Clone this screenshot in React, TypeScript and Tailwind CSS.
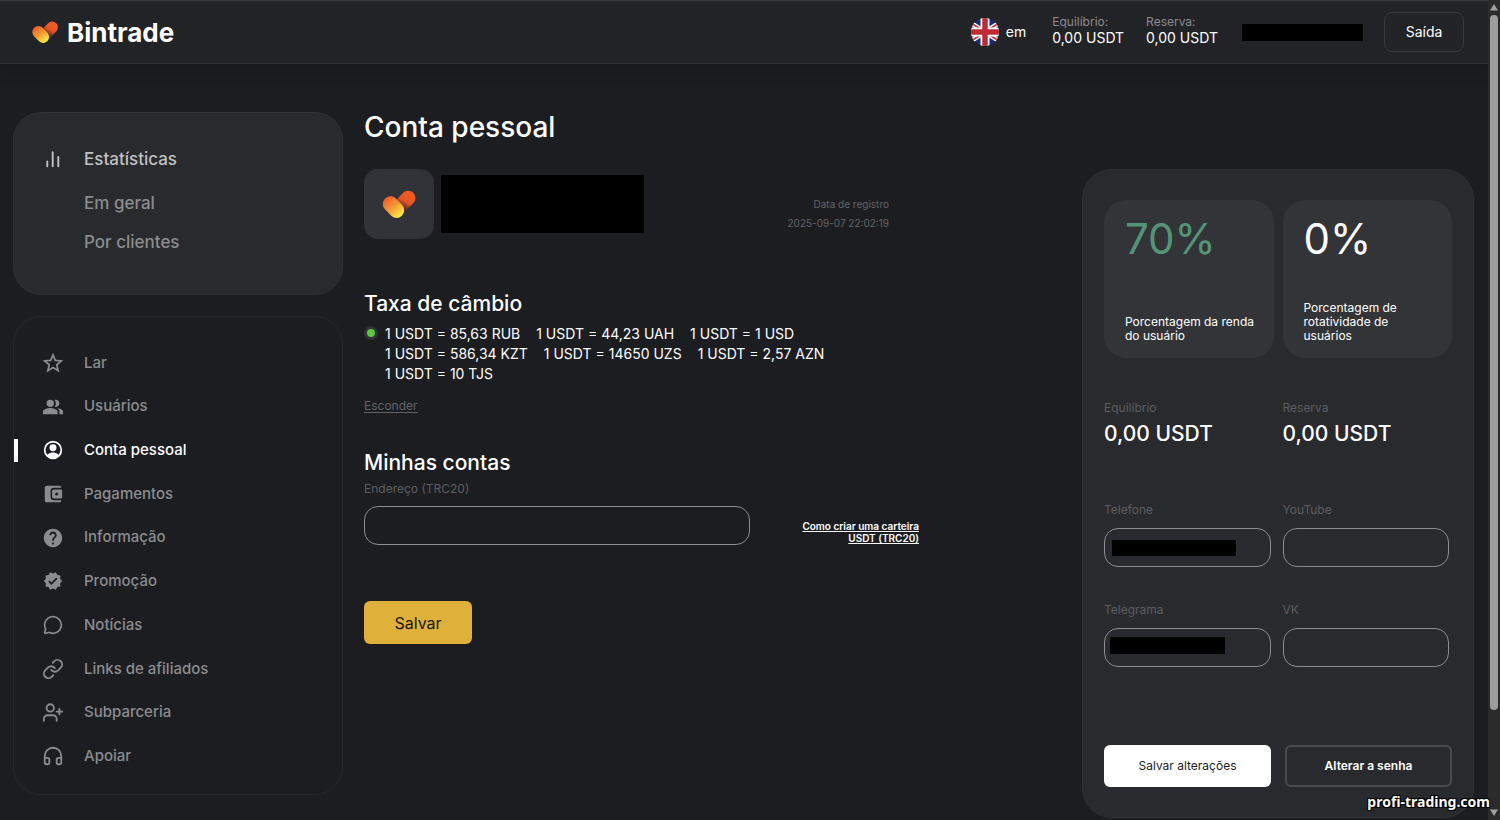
import { useState } from 'react';
import type { ReactNode } from 'react';
import { Headphones, Link, MessageCircle, UserPlus } from 'lucide-react';
import { MdHelp, MdPeopleAlt, MdVerified } from 'react-icons/md';

interface NavItem {
    label: string;
    icon: ReactNode;
}

const rates = [
    '1 USDT = 85,63 RUB',
    '1 USDT = 44,23 UAH',
    '1 USDT = 1 USD',
    '1 USDT = 586,34 KZT',
    '1 USDT = 14650 UZS',
    '1 USDT = 2,57 AZN',
    '1 USDT = 10 TJS',
];

const StatsIcon = () => (
    <svg viewBox="0 0 22 22" className="size-[22px]" fill="none" stroke="currentColor" strokeWidth="1.9" strokeLinecap="round">
        <path d="M5.300 13.500v4.700M10.700 4.200v14M16.300 9v9.200" />
    </svg>
);

const StarIcon = () => (
    <svg viewBox="0 0 24 24" className="size-[22px]" fill="none" stroke="currentColor" strokeWidth="1.9">
        <path d="M12 3.200l2.500 5.900 6.500.6-4.900 4.300 1.500 6.400L12 17l-5.600 3.400L7.900 14 3 9.700l6.500-.6z" />
    </svg>
);

const AccountIcon = () => (
    <svg viewBox="0 0 24 24" className="size-[22px]" fill="currentColor">
        <path
            fillRule="evenodd"
            d="M12 2a10 10 0 1 0 0 20 10 10 0 0 0 0-20zm0 2a8 8 0 0 1 6.200 13.050C16.770 15.310 13.300 14.700 12 14.700s-4.770.6-6.200 2.350A8 8 0 0 1 12 4z"
        />
        <circle cx="12" cy="9.600" r="3.800" />
    </svg>
);

const WalletIcon = () => (
    <svg viewBox="0 0 24 24" className="size-[22px]" fill="currentColor">
        <path d="M5 3h14a2 2 0 0 1 2 1.500V5.300H13A3.700 3.700 0 0 0 9.300 9v6a3.700 3.700 0 0 0 3.700 3.700h8v.8A2 2 0 0 1 19 21H5a2 2 0 0 1-2-2V5a2 2 0 0 1 2-2z" />
        <path
            fillRule="evenodd"
            d="M13 7h7.500A1.500 1.500 0 0 1 22 8.500v7a1.500 1.500 0 0 1-1.500 1.500H13a2 2 0 0 1-2-2V9a2 2 0 0 1 2-2zm3 3.300a1.700 1.700 0 1 0 0 3.400 1.700 1.700 0 0 0 0-3.400z"
        />
    </svg>
);

const navItems: NavItem[] = [
    { label: 'Lar', icon: <StarIcon /> },
    { label: 'Usuários', icon: <MdPeopleAlt size={22} /> },
    { label: 'Conta pessoal', icon: <AccountIcon /> },
    { label: 'Pagamentos', icon: <WalletIcon /> },
    { label: 'Informação', icon: <MdHelp size={22} /> },
    { label: 'Promoção', icon: <MdVerified size={20} /> },
    { label: 'Notícias', icon: <MessageCircle size={20} strokeWidth={2} /> },
    { label: 'Links de afiliados', icon: <Link size={22} strokeWidth={2} /> },
    { label: 'Subparceria', icon: <UserPlus size={23} strokeWidth={2} /> },
    { label: 'Apoiar', icon: <Headphones size={22} strokeWidth={2} /> },
];

const HeartLogo = ({ id, className }: { id: string; className: string }) => (
    <svg viewBox="0 0 34 28" className={className}>
        <defs>
            <linearGradient id={`${id}-back`} gradientUnits="userSpaceOnUse" x1="26" y1="8" x2="20" y2="18">
                <stop offset="0" stopColor="#ee5a24" />
                <stop offset="0.35" stopColor="#e55524" />
                <stop offset="1" stopColor="#4a2b25" />
            </linearGradient>
            <linearGradient id={`${id}-front`} gradientUnits="userSpaceOnUse" x1="4" y1="8" x2="18" y2="26">
                <stop offset="0" stopColor="#ef5c25" />
                <stop offset="0.5" stopColor="#f39a37" />
                <stop offset="1" stopColor="#ffea3f" />
            </linearGradient>
        </defs>
        <path d="M26.200 8L17 17.500" stroke={`url(#${id}-back)`} strokeWidth="14.500" strokeLinecap="round" />
        <path d="M8.500 14L14.500 20.200" stroke={`url(#${id}-front)`} strokeWidth="15.400" strokeLinecap="round" />
    </svg>
);

const FlagIcon = () => (
    <svg viewBox="0 0 28 28" className="size-7">
        <defs>
            <clipPath id="flag-round">
                <circle cx="14" cy="14" r="14" />
            </clipPath>
        </defs>
        <g clipPath="url(#flag-round)">
            <path fill="#1b2a72" d="M0 0h28v28H0z" />
            <path stroke="#fff" strokeWidth="4.500" d="M0 5l28 18M28 5L0 23" />
            <path stroke="#c9303a" strokeWidth="1.800" d="M0 5l28 18M28 5L0 23" />
            <path stroke="#fff" strokeWidth="9" d="M14 0v28M0 14h28" />
            <path stroke="#be2a35" strokeWidth="5.500" d="M14 0v28M0 14h28" />
        </g>
    </svg>
);

const HeaderBalance = ({ label, value }: { label: string; value: string }) => (
    <div>
        <div className="text-xs leading-4 text-[#8b8c8f]">{label}</div>
        <div className="text-sm leading-4 text-white">{value}</div>
    </div>
);

const Header = () => (
    <header className="flex h-16 items-center justify-between border-y border-t-[#37383a] border-b-[#303134] bg-[#222327] pl-[31px] pr-6 shadow-[0_4px_16px_rgba(0,0,0,0.2)]">
        <a href="#" className="flex items-center gap-2">
            <HeartLogo id="brand" className="h-[22px] w-7" />
            <span className="pt-0.5 text-[26px] leading-8 font-bold text-white">Bintrade</span>
        </a>
        <div className="flex items-center">
            <button type="button" className="mr-[26px] flex items-center gap-[7px] text-sm text-white">
                <FlagIcon />
                em
            </button>
            <div className="mr-6 flex gap-[22px] pb-1">
                <HeaderBalance label="Equilíbrio:" value="0,00 USDT" />
                <HeaderBalance label="Reserva:" value="0,00 USDT" />
            </div>
            <div className="mr-[21px] h-[17px] w-[121px] bg-black" />
            <button type="button" className="h-10 w-20 rounded-lg border border-[#393a3d] text-sm text-white">
                Saída
            </button>
        </div>
    </header>
);

const Sidebar = () => {
    const [active, setActive] = useState('Conta pessoal');

    return (
        <aside className="flex w-[330px] shrink-0 flex-col gap-[21px] pb-[25px] font-medium text-[#8b8c8e]">
            <div className="rounded-[28px] border border-[#303134] bg-[#292a2d] pt-[34px] pb-10 pl-7 text-[17px] leading-6">
                <a href="#" className="flex items-center gap-5 text-[#bfc1c2]">
                    <StatsIcon />
                    Estatísticas
                </a>
                <div className="mt-5 flex flex-col gap-[15px] pl-[42px]">
                    <a href="#">Em geral</a>
                    <a href="#">Por clientes</a>
                </div>
            </div>
            <nav className="flex flex-1 flex-col rounded-[28px] border border-[#27282b] pt-6 pb-4 text-[15px]">
                {navItems.map((item) => (
                    <a
                        key={item.label}
                        href="#"
                        onClick={() => setActive(item.label)}
                        className={`flex flex-1 items-center ${active === item.label ? 'text-white' : ''}`}
                    >
                        <span className={`h-[23px] w-1 ${active === item.label ? 'bg-white' : ''}`} />
                        <span className="mr-5 ml-6 flex w-[22px] justify-center">{item.icon}</span>
                        {item.label}
                    </a>
                ))}
            </nav>
        </aside>
    );
};

const AccountSection = () => {
    const [ratesOpen, setRatesOpen] = useState(true);

    return (
        <div className="min-w-0 flex-1">
            <div className="flex max-w-[525px] items-center">
                <div className="flex size-[70px] items-center justify-center rounded-[14px] bg-[#323338]">
                    <HeartLogo id="avatar" className="h-7 w-[34px]" />
                </div>
                <div className="ml-[7px] h-[58px] w-[203px] bg-black" />
                <div className="ml-auto pt-5 text-right text-[10px] leading-[19px] text-[#626366]">
                    <div>Data de registro</div>
                    <div>2025-09-07 22:02:19</div>
                </div>
            </div>

            <section className="mt-[51px] max-w-[525px]">
                <h2 className="text-[21px] leading-7 font-medium text-white">Taxa de câmbio</h2>
                {ratesOpen && (
                    <div className="mt-1.5 flex gap-[7px]">
                        <span className="mt-0.5 flex size-3.5 shrink-0 items-center justify-center rounded-full bg-[#313236]">
                            <span className="size-2 rounded-full bg-[#5ec641]" />
                        </span>
                        <ul className="flex flex-wrap gap-x-4 text-sm leading-5 text-white">
                            {rates.map((rate) => (
                                <li key={rate}>{rate}</li>
                            ))}
                        </ul>
                    </div>
                )}
                <button
                    type="button"
                    onClick={() => setRatesOpen((prev) => !prev)}
                    className="mt-3.5 block text-xs leading-4 text-[#626366] underline underline-offset-2"
                >
                    Esconder
                </button>
            </section>

            <section className="mt-[35px] max-w-[555px]">
                <h2 className="text-[21px] leading-7 font-medium text-white">Minhas contas</h2>
                <label htmlFor="trc20" className="mt-1 block text-xs leading-4 text-[#5c5d60]">
                    Endereço (TRC20)
                </label>
                <div className="mt-[9px] flex items-center justify-between">
                    <input
                        id="trc20"
                        type="text"
                        className="h-[39px] w-[386px] rounded-[14px] border border-[#8c8d8f] bg-transparent px-3 text-sm text-white"
                    />
                    <a href="#" className="w-[130px] pt-3 text-right text-[10px] leading-3 font-semibold text-white underline">
                        Como criar uma carteira USDT (TRC20)
                    </a>
                </div>
                <button type="button" className="mt-14 h-[43px] w-[108px] rounded-md bg-[#e0b13a] text-base text-[#15130c]">
                    Salvar
                </button>
            </section>
        </div>
    );
};

const PercentCard = ({ value, label, valueClass }: { value: string; label: string; valueClass: string }) => (
    <div className="flex h-[158px] flex-col justify-between rounded-[22px] bg-[#333437] pt-[15px] pr-2.5 pb-[15px] pl-[21px]">
        <div className={`text-[42px] leading-[48px] ${valueClass}`}>{value}</div>
        <div className="max-w-[134px] text-xs leading-[14px] text-white">{label}</div>
    </div>
);

const Balance = ({ label, value }: { label: string; value: string }) => (
    <div>
        <div className="text-xs leading-4 text-[#5c5d60]">{label}</div>
        <div className="mt-1 text-[21px] leading-7 font-medium text-white">{value}</div>
    </div>
);

const Field = ({ id, label, children }: { id: string; label: string; children?: ReactNode }) => (
    <div>
        <label htmlFor={id} className="block text-xs leading-4 text-[#5c5d60]">
            {label}
        </label>
        <div className="relative mt-2.5">
            <input
                id={id}
                type="text"
                className="block h-[39px] w-full rounded-[14px] border border-[#8c8d8f] bg-transparent px-3 text-sm text-white"
            />
            {children}
        </div>
    </div>
);

const ProfilePanel = () => (
    <div className="w-[392px] shrink-0 rounded-[30px] border border-[#303134] bg-[#292a2d] px-[21px] pt-[30px] pb-[30px]">
        <div className="grid grid-cols-2 gap-[9px]">
            <PercentCard value="70%" label="Porcentagem da renda do usuário" valueClass="text-[#549478]" />
            <PercentCard value="0%" label="Porcentagem de rotatividade de usuários" valueClass="text-white" />
        </div>
        <div className="mt-[42px] grid grid-cols-2 gap-[9px]">
            <Balance label="Equilíbrio" value="0,00 USDT" />
            <Balance label="Reserva" value="0,00 USDT" />
        </div>
        <form>
            <div className="mt-[54px] grid grid-cols-2 gap-x-3 gap-y-[35px] pr-[3px]">
                <Field id="phone" label="Telefone">
                    <span className="absolute top-3 left-2 h-4 w-[124px] bg-black" />
                </Field>
                <Field id="youtube" label="YouTube" />
                <Field id="telegram" label="Telegrama">
                    <span className="absolute top-[9px] left-1.5 h-[17px] w-[115px] bg-black" />
                </Field>
                <Field id="vk" label="VK" />
            </div>
            <div className="mt-[78px] grid grid-cols-2 gap-3.5 text-xs">
                <button type="button" className="h-[42px] rounded-md bg-white text-[#1d1e21]">
                    Salvar alterações
                </button>
                <button type="button" className="h-[42px] rounded-md border-2 border-[#4a4b4e] font-semibold text-white">
                    Alterar a senha
                </button>
            </div>
        </form>
    </div>
);

const ScrollRail = () => (
    <div className="flex w-3 shrink-0 flex-col items-center justify-between bg-[#2b2b2c] py-1">
        <svg viewBox="0 0 8 7" className="h-[7px] w-2" fill="#a0a0a0">
            <path d="M4 0l4 6.500H0z" />
        </svg>
        <div className="mt-1 mb-auto h-[695px] w-2 rounded-full bg-[#9d9d9d]" />
        <svg viewBox="0 0 8 7" className="h-[7px] w-2" fill="#a0a0a0">
            <path d="M4 7L0 .5h8z" />
        </svg>
    </div>
);

export default function App() {
    return (
        <div className="relative flex min-h-screen bg-[#1c1d21] font-['Inter',sans-serif]">
            <div className="flex min-w-0 flex-1 flex-col">
                <Header />
                <div className="flex flex-1 gap-[21px] pt-12 pr-3.5 pl-[13px]">
                    <Sidebar />
                    <main className="min-w-0 flex-1">
                        <h1 className="text-[28px] leading-[30px] font-medium text-white">Conta pessoal</h1>
                        <div className="mt-[27px] flex">
                            <AccountSection />
                            <ProfilePanel />
                        </div>
                    </main>
                </div>
            </div>
            <ScrollRail />
            <div className="absolute right-2.5 bottom-2.5 font-['Noto_Sans',sans-serif] text-sm leading-4 font-bold text-white [text-shadow:-1px_-1px_0_#000,1px_-1px_0_#000,-1px_1px_0_#000,1px_1px_0_#000]">
                profi-trading.com
            </div>
        </div>
    );
}
